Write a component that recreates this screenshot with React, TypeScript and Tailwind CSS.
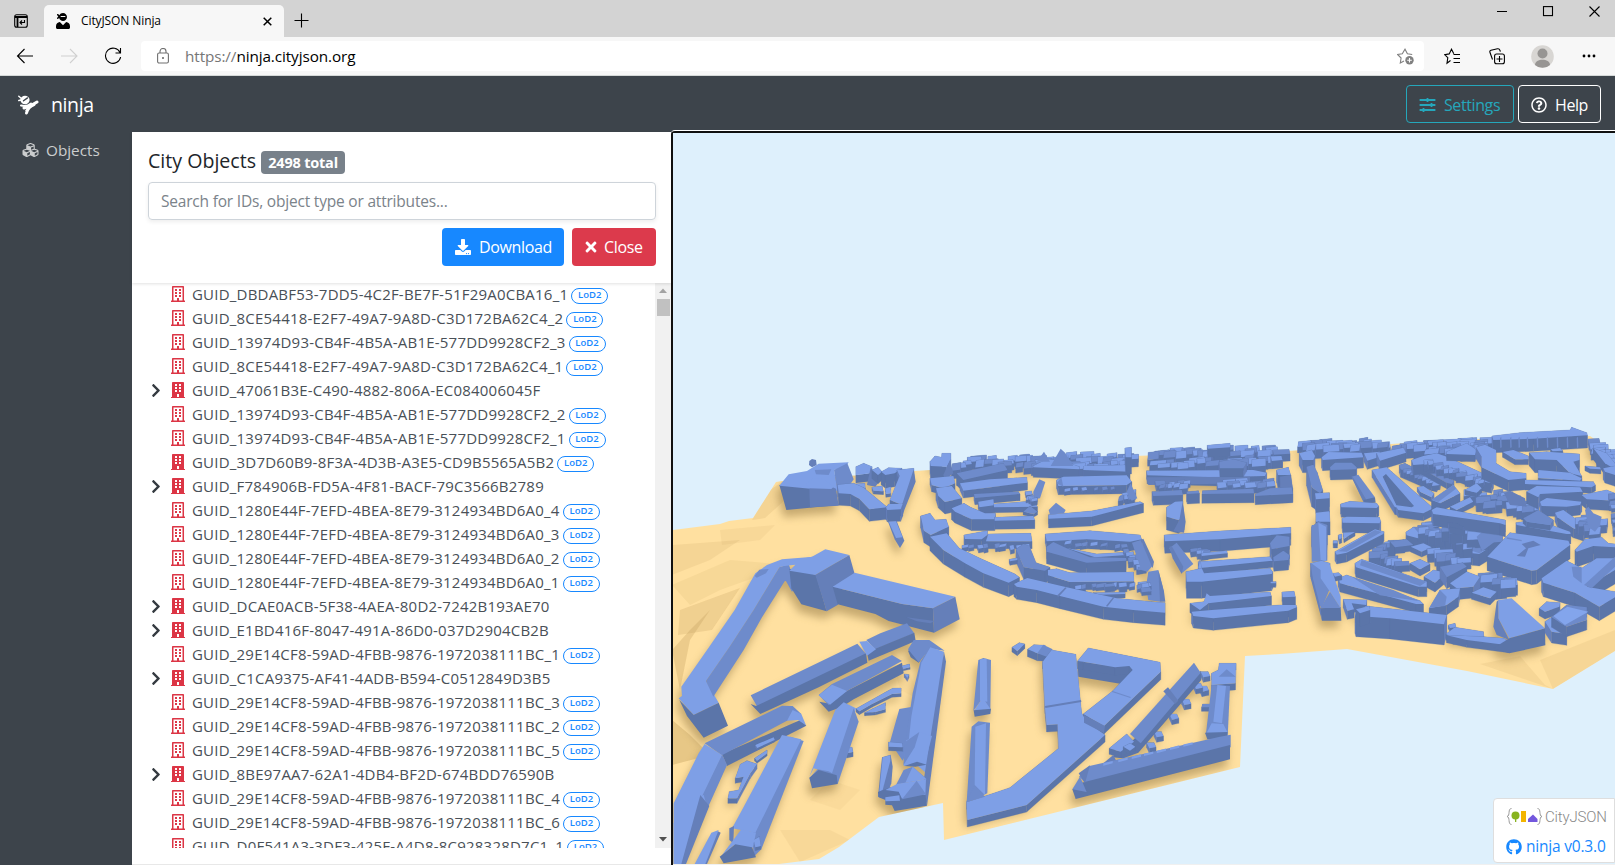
import React from "react";
import {
  FaBuilding, FaChevronRight, FaCubes, FaDownload, FaGithub, FaRegBuilding,
  FaRegQuestionCircle, FaSlidersH, FaTimes, FaUserNinja,
} from "react-icons/fa";

type Kind = "part" | "leaf" | "parent";

const objects: [string, Kind][] = [
  ["GUID_DBDABF53-7DD5-4C2F-BE7F-51F29A0CBA16_1", "part"],
  ["GUID_8CE54418-E2F7-49A7-9A8D-C3D172BA62C4_2", "part"],
  ["GUID_13974D93-CB4F-4B5A-AB1E-577DD9928CF2_3", "part"],
  ["GUID_8CE54418-E2F7-49A7-9A8D-C3D172BA62C4_1", "part"],
  ["GUID_47061B3E-C490-4882-806A-EC084006045F", "parent"],
  ["GUID_13974D93-CB4F-4B5A-AB1E-577DD9928CF2_2", "part"],
  ["GUID_13974D93-CB4F-4B5A-AB1E-577DD9928CF2_1", "part"],
  ["GUID_3D7D60B9-8F3A-4D3B-A3E5-CD9B5565A5B2", "leaf"],
  ["GUID_F784906B-FD5A-4F81-BACF-79C3566B2789", "parent"],
  ["GUID_1280E44F-7EFD-4BEA-8E79-3124934BD6A0_4", "part"],
  ["GUID_1280E44F-7EFD-4BEA-8E79-3124934BD6A0_3", "part"],
  ["GUID_1280E44F-7EFD-4BEA-8E79-3124934BD6A0_2", "part"],
  ["GUID_1280E44F-7EFD-4BEA-8E79-3124934BD6A0_1", "part"],
  ["GUID_DCAE0ACB-5F38-4AEA-80D2-7242B193AE70", "parent"],
  ["GUID_E1BD416F-8047-491A-86D0-037D2904CB2B", "parent"],
  ["GUID_29E14CF8-59AD-4FBB-9876-1972038111BC_1", "part"],
  ["GUID_C1CA9375-AF41-4ADB-B594-C0512849D3B5", "parent"],
  ["GUID_29E14CF8-59AD-4FBB-9876-1972038111BC_3", "part"],
  ["GUID_29E14CF8-59AD-4FBB-9876-1972038111BC_2", "part"],
  ["GUID_29E14CF8-59AD-4FBB-9876-1972038111BC_5", "part"],
  ["GUID_8BE97AA7-62A1-4DB4-BF2D-674BDD76590B", "parent"],
  ["GUID_29E14CF8-59AD-4FBB-9876-1972038111BC_4", "part"],
  ["GUID_29E14CF8-59AD-4FBB-9876-1972038111BC_6", "part"],
  ["GUID_D0F541A3-3DF3-425F-A4D8-8C928328D7C1_1", "part"],
];

/* ---------- 3D city view ---------- */

const TONES: Record<string, string> = { t: "#7e9fe6", l: "#83a5ec", m: "#6e8bcb", s: "#657fb9", d: "#5b75a9" };

// "<tone><height> x,y x,y ..." : a roof outline and the height its walls drop.
function Block({ spec }: { spec: string }) {
  const [head, ...rest] = spec.split(" ");
  const h = Number(head.slice(1));
  const pts = rest.map((p) => p.split(",").map(Number));
  const walls = pts
    .map((p, i) => [p, pts[(i + 1) % pts.length]])
    .sort((a, b) => a[0][1] + a[1][1] - b[0][1] - b[1][1]);
  return (
    <g>
      {h > 0 &&
        walls.map(([a, b], i) => {
          const steep = Math.abs(b[1] - a[1]) > Math.abs(b[0] - a[0]) * 1.3;
          const fill = steep ? TONES.s : TONES.d;
          return (
            <polygon key={i} fill={fill} stroke={fill} strokeWidth="0.8"
              points={`${a[0]},${a[1]} ${b[0]},${b[1]} ${b[0]},${b[1] + h} ${a[0]},${a[1] + h}`} />
          );
        })}
      <polygon points={rest.join(" ")} fill={TONES[head[0]]} />
    </g>
  );
}

// A band of small houses between two points.
function houses(x0: number, y0: number, x1: number, y1: number, n: number, size: number, spread: number, seed: number) {
  let s = seed * 7919;
  const rnd = () => ((s = (s * 16807) % 2147483647) / 2147483647);
  const out: { y: number; spec: string }[] = [];
  for (let i = 0; i < n; i++) {
    const t = (i + rnd() * 0.6) / n;
    const x = x0 + (x1 - x0) * t;
    const y = y0 + (y1 - y0) * t + (rnd() - 0.5) * spread;
    const w = size * (0.6 + rnd() * 0.8);
    const d = size * (0.25 + rnd() * 0.3);
    const h = Math.round(size * (0.45 + rnd() * 0.4));
    const k = (rnd() - 0.5) * 8;
    const f = (a: number, b: number) => `${a.toFixed(1)},${b.toFixed(1)}`;
    const tone = rnd() > 0.5 ? "t" : "m";
    out.push({ y, spec: `${tone}${h} ${f(x, y)} ${f(x + w, y - 3 + k / 3)} ${f(x + w + k, y + d)} ${f(x + k, y + d + 3)}` });
  }
  return out.sort((a, b) => a.y - b.y).map((o) => o.spec);
}

const west = [
  "d0 322,195 480,200 500,255 343,270",
  "t0 322,197 350,163 405,153 440,131 530,127 520,140 486,150 498,215 480,203 415,206",
  "m0 486,150 526,130 545,178 520,215 496,212",
  "m0 428,150 478,148 470,165 432,163", "s0 412,206 425,190 450,188 492,206 500,257 414,262", "t0 402,192 425,174 455,178 485,200 478,207 412,205",
  "s0 412,123 420,117 432,120 434,135 420,142 411,135",
  "t24 552,140 575,130 600,140 596,160 552,165", "s0 596,142 625,180 610,200 585,195",
  "t26 600,150 618,142 630,155 618,165", "t40 628,155 650,143 690,145 668,160 640,165",
  "t10 600,202 630,198 634,214 604,212", "t10 640,206 656,200 656,220 642,222",
  "t12 548,192 578,190 580,205 550,208",
  "t14 675,150 725,145 727,175 705,225 690,255 654,240 683,168",
  "s0 725,148 731,185 697,270 688,300 690,255",
  "t36 497,194 545,190 575,203 605,228 646,262 592,268 562,236 535,222 500,220",
  "t36 642,262 650,252 692,252 686,268 646,270",
  "s0 648,305 674,303 697,362 684,384 668,358",
  "t0 650,305 672,304 692,352 672,354",
];
const westFront = [
  "m0 325,442 350,432 372,500 360,515 340,480 330,484",
  "t0 250,460 285,435 330,418 425,410 322,442 245,570 173,680 102,783 140,848 65,885 20,835 30,828 28,800 105,690 188,570",
  "m0 322,442 350,436 364,478 338,484 305,536 270,592 215,690 124,830 102,783 173,680 245,570",
  "m0 248,468 262,449 290,447 282,460 254,473",
  "d0 65,885 140,848 168,917 95,953 45,888 22,840",
  "d0 352,446 432,464 464,574 388,553 358,505",
  "t0 318,440 345,425 420,410 460,388 532,405 430,465 352,452 370,434",
  "s0 430,465 532,405 548,462 500,520 498,554 464,574",
  "d0 482,500 690,552 783,565 786,638 650,603 610,582 497,553",
  "t0 482,500 548,458 850,530 783,565 690,552",
  "s0 783,565 850,530 863,598 786,638", "s0 704,592 788,603 775,610 735,604",
];

const southWest = [
  "m0 583,90 625,70 705,40 727,70 610,118", "d0 727,68 731,93 590,152 585,128 610,116",
  "m0 236,256 460,148 556,101 582,132 256,290", "d0 252,288 582,130 586,158 440,232 265,312 236,282", "t0 562,95 585,93 612,118 585,137",
  "d0 465,280 520,245 690,158 695,190 545,268 510,290 470,305 442,275",
  "m0 440,255 480,222 660,135 690,153 515,248 470,285", "t0 440,256 480,224 525,243 474,284",
  "t6 690,168 712,162 714,172 694,176", "t10 697,192 711,194 706,204",
  "t10 552,296 640,247 662,235 687,234 687,250 660,252 600,282 562,304", "t9 578,308 602,296 640,278 640,298 610,306",
  "t14 518,412 540,412 543,426 524,430",
  "t0 470,350 490,300 515,277 552,295 490,495 425,475 412,500", "m0 545,295 560,335 497,522 480,490", "m0 412,505 437,478 470,484 490,495 470,510", "d0 412,503 440,480 494,496 497,522 420,535",
  "d0 708,122 716,142 740,158 780,100", "m0 708,118 725,90 772,90 818,122 775,116 740,157",
  "m0 682,297 722,290 708,420 692,452 670,420 650,410", "t12 650,396 690,400 692,412 650,410",
  "m0 745,155 722,250 700,395 700,468 745,375 772,115",
  "t0 748,158 775,112 816,125 775,500 705,440 718,320",
  "s0 816,125 822,155 765,587 752,530",
  "s0 630,442 656,434 662,470 658,520 640,566 618,560", "t0 632,442 655,436 655,452 632,540 622,545",
  "t0 702,392 742,366 780,378 758,462 695,468", "m0 700,395 742,366 728,412 694,466", "d0 697,468 735,455 764,464 730,470",
  "m0 672,525 695,480 722,470 762,505", "t0 722,470 764,508 700,518",
  "d0 618,546 655,532 690,545 760,552 765,587 668,603 660,586 640,584 640,570 620,562", "t0 640,540 675,522 762,508 760,555 735,552 690,566 680,545", "m0 734,512 762,553 690,568", "t0 640,562 682,556 684,572 640,574",
  "d0 150,432 385,330 403,347 165,468", "m0 98,400 330,287 362,288 388,312 345,332 150,436", "t0 345,332 362,300 388,312 402,346 378,330",
  "m0 150,432 165,465 108,592 35,762 10,762 80,575", "t0 5,580 80,430 98,402 150,435 80,580 30,680 5,762",
  "t0 5,640 40,575 95,555 105,590 30,762 5,762", "s0 85,555 112,588 42,762 28,762",
  "t6 250,405 305,382 308,390 256,414", "t8 248,445 285,420 285,430 255,452",
  "t15 205,463 225,452 255,462 235,490 195,565 168,565 172,545 200,540 215,500 190,505",
  "m0 355,380 395,393 268,718 245,740 240,660", "t0 210,600 330,375 388,388 250,668 180,655",
  "t10 245,690 262,680 266,708 250,712", "s0 172,655 186,648 184,700 172,690",
  "t0 208,658 252,668 242,714 185,706 150,735", "d0 143,740 190,703 240,712 252,742 155,760",
  "s0 135,662 146,668 105,762 85,762", "t0 118,668 140,660 100,762 68,762",
];

const south = [
  "t14 246,52 268,38 284,42 262,63", "t22 293,58 312,44 345,46 352,72 322,70", "m0 322,70 340,44 368,58 350,80",
  "m0 145,90 160,84 183,90 181,240 158,205 130,242", "t0 150,88 170,86 172,215 150,212", "t0 158,203 182,238 132,242", "d0 131,241 183,236 181,252 134,260",
  "d0 443,97 555,108 605,106 612,128 575,162 445,140",
  "t24 443,93 475,54 690,97 692,125 522,288 460,252 548,183 608,120 598,108 555,112 460,95",
  "t21 338,95 365,60 437,73 455,250 470,275 525,315 290,525 112,570 110,517 240,473 386,355 383,283 350,285 345,230",
  "s0 345,228 453,210 454,216 346,234", "m0 546,182 602,201 601,204 546,186", "s0 462,255 525,288 522,310 462,278",
  "m0 125,290 145,274 180,278 172,490 110,517", "t0 136,290 168,280 165,495 134,465", "m0 134,466 165,500 108,517",
  ...[[812, 125], [808, 168], [755, 208], [718, 252], [672, 305], [650, 338], [790, 160]].map(([x, y]) => `t15 ${x},${y} ${x + 22},${y} ${x + 28},${y + 13} ${x + 8},${y + 17}`),
  "d0 812,122 814,150 625,368 580,385 545,382 600,340", "m0 600,312 792,98 812,128 632,340", "s0 700,184 714,172 745,212 735,222", "t18 538,355 590,312 612,335 572,365", "t12 580,350 600,340 616,350 600,362",
  "s0 510,408 550,375 560,395",
  "t20 845,130 865,120 868,100 918,100 916,160 845,165", "m0 866,140 890,118 917,140", "m12 818,222 845,222 845,232 815,232",
  "m0 845,165 900,168 893,320 828,310", "t0 862,165 888,168 876,280 850,275", "t0 830,308 845,280 880,282 893,308", "d0 825,308 893,306 890,328 832,328",
  "m0 447,440 478,408 870,320 902,314 902,352 467,458", "d0 455,458 900,345 900,388 437,507 427,478", "m0 427,478 450,440 470,486", "s0 446,430 480,406 465,460",
  ...[520, 565, 605, 642, 680, 720, 760].map((x) => `t0 ${x},${400 - (x - 520) * 0.235} ${x + 28},${393 - (x - 520) * 0.235} ${x + 28},${400 - (x - 520) * 0.235} ${x},${407 - (x - 520) * 0.235}`),
];

const centre = [
  ...houses(150, 122, 680, 104, 34, 34, 26, 77), ...houses(740, 92, 1130, 84, 24, 36, 22, 912),
  ...houses(745, 126, 1130, 110, 20, 34, 16, 913), ...houses(340, 130, 690, 124, 16, 30, 14, 44),
  "t38 90,125 105,108 125,112 126,100 152,100 152,118 140,140 92,138", "s0 150,120 160,160 135,180 130,165",
  "t26 922,76 990,70 990,82 924,86",
  "t30 400,138 440,118 480,120 538,140 538,148 400,142", "m0 452,138 482,86 495,98 520,138", "m0 410,125 432,95 450,125",
  "t24 552,138 675,135 690,155 550,150", "t50 675,84 694,82 694,112 677,112",
  "m36 170,160 310,130 322,150 190,180", "t22 180,190 270,178 380,172 382,188 190,212", "m20 222,222 355,215 360,222 225,234",
  "t20 90,175 160,168 165,190 130,205 95,195", "t36 108,205 155,198 185,235 135,246 115,228",
  "m0 400,215 418,178 436,186 420,235 400,238", "t22 235,245 280,238 282,256 238,262", "t16 282,252 400,243 412,260 282,262",
  ...houses(375, 220, 400, 245, 5, 18, 12, 51), "m10 370,275 390,258 412,275 400,282",
  "t34 155,265 192,250 212,262 255,280 286,280 284,298 215,298 165,275", "t26 284,292 400,288 404,300 284,302",
  "t26 470,180 490,170 680,166 695,185 680,195 475,198", "m0 470,190 484,172 490,200", ...houses(485, 206, 650, 200, 6, 14, 4, 9),
  ...houses(655, 225, 690, 215, 6, 22, 16, 94), "m0 680,215 692,190 712,235 695,242",
  "t28 446,284 575,273 720,245 730,250 575,290 446,296", "m0 446,270 468,248 497,270 492,280 450,284",
  "t26 740,152 1060,150 1100,158 1095,168 950,172 742,166", "s0 740,172 1050,170 1050,190 745,195", "m26 958,125 1000,118 1040,128 1030,145 960,145",
  ...houses(765, 190, 860, 188, 9, 22, 14, 17), ...houses(950, 185, 1110, 180, 12, 26, 18, 18),
  "t38 1130,150 1165,142 1172,165 1134,165", "s40 1140,170 1172,165 1178,205 1142,205",
  "m28 756,215 845,210 848,225 760,228", "m30 860,215 895,212 898,220 862,222", "m28 908,212 1060,206 1062,220 906,222", "m26 1066,222 1110,205 1175,202 1178,222 1066,228",
  "t40 800,262 825,245 848,244 852,290 835,300 800,290", "s0 848,246 857,305 852,338 820,334 838,300",
  "t36 62,288 90,280 105,300 138,298 146,320 92,345 72,332",
  "t28 192,345 262,332 262,345 245,358 195,357", "t22 265,342 392,340 396,364 258,364", ...houses(180, 374, 385, 374, 9, 18, 6, 40),
  "t28 436,342 570,332 720,345 725,358 690,365 560,358 440,364", ...houses(480, 367, 690, 374, 7, 15, 8, 31),
  "t12 500,384 590,402 690,396 690,404 585,412", ...houses(670, 390, 720, 440, 9, 22, 20, 33),
  "m0 696,368 722,360 760,435 742,455 724,450", "s0 722,360 730,356 762,425 758,445",
  "m36 440,380 460,366 500,385 570,412 678,414 678,422 560,428 440,395",
  "m38 348,388 370,372 388,378 408,428 450,442 435,452 372,442", "t12 328,418 352,414 352,420 330,424",
  "t24 444,450 470,446 510,458 700,456 702,484 510,486 444,466", ...houses(520, 495, 700, 488, 8, 20, 6, 71),
  "m0 738,500 745,455 775,450 792,515 780,545 745,540", "s0 775,450 792,515 796,545 780,545", ...houses(710, 492, 730, 500, 5, 20, 20, 55), "t12 580,518 675,517 675,522 600,524",
  "t42 90,350 140,340 178,385 240,415 345,462 358,472 326,488 250,460 195,430 130,390",
  "t38 342,492 382,474 500,502 650,535 755,545 795,548 795,578 700,570 610,560 480,528 410,510 350,500",
  "s0 470,528 496,502 500,504 476,530", "s0 618,558 640,530 644,532 622,560",
  "t36 793,345 960,333 1172,322 1172,340 960,358 795,364", "m38 1110,370 1130,346 1168,350 1168,378 1115,388",
  "m0 808,385 830,368 880,432 845,460", "s0 808,380 815,378 850,440 845,462 818,415", ...houses(870, 385, 920, 400, 6, 22, 14, 21), "t12 905,400 980,392 982,400 905,408",
  "t20 895,425 1110,410 1118,422 900,444", "m30 1120,412 1150,392 1168,405 1165,420 1122,424", "t40 895,445 900,420 908,460",
  "t50 858,455 905,445 912,460 1110,445 1118,455 1115,462 905,485 860,485", "t12 1112,485 1128,485 1127,490 1112,490",
  "t28 870,550 912,545 920,520 930,528 1110,516 1114,528 925,550 900,570", "t28 1146,516 1182,514 1186,530 1148,532",
  "t36 875,575 935,570 1140,555 1188,555 1190,562 1165,572 940,595 880,588",
];

const east = [
  ...houses(50, 100, 300, 94, 20, 38, 20, 303), ...houses(330, 102, 610, 90, 20, 38, 16, 304), ...houses(430, 118, 600, 104, 14, 34, 16, 305),
  "t38 636,78 720,68 870,60 875,52 920,68 922,76 760,86 640,90", ...[660, 690, 715, 740, 770, 800, 830, 860, 890].map((x) => `m0 ${x},84 ${x + 4},80 ${x + 5},112 ${x + 1},114`),
  ...houses(920, 92, 1000, 150, 12, 36, 26, 306), "t34 940,115 980,130 1005,160 1005,178 975,160", "t14 915,168 960,172 962,178 930,176", "t34 970,175 1005,168 1005,195 975,185",
  "t14 812,118 840,114 848,122 818,124",
  "t38 58,130 95,120 105,138 100,150 68,150", "t32 125,142 145,126 245,128 250,142 128,150", "t26 252,130 300,125 300,140 262,152", "t28 290,130 370,113 378,128 300,152",
  "m30 150,172 165,158 215,158 230,172 228,178 152,180",
  "m58 80,170 100,164 112,188 128,240 120,250 95,232", "t42 105,250 148,248 148,265 108,268", "t40 108,308 148,304 150,335 108,335",
  "m0 215,200 235,194 285,262 268,272 250,272", "s0 214,200 218,200 258,268 252,280", "d0 250,270 285,262 287,278 255,280",
  "t30 182,282 210,274 290,280 296,288 290,294 184,292", "t30 186,325 200,320 298,322 302,334 298,340 188,338",
  "d0 305,195 325,192 450,295 430,320 355,310 348,290",
  "t22 276,180 320,172 335,185 460,295 430,310 355,300 348,290 345,285 395,292 402,288 318,192 308,200 352,292 345,292",
  "m24 358,165 375,160 475,212 470,222 455,218 362,178", ...houses(368, 175, 465, 220, 9, 18, 6, 310), "t14 412,232 430,228 462,250 455,262 420,245", "m18 418,172 440,166 522,212 515,222 500,218",
  "t30 395,150 430,138 470,130 500,140 640,205 635,220 600,212 470,160 400,165", ...houses(430, 150, 610, 215, 15, 24, 8, 311),
  "t20 560,100 590,120 585,135 500,132 500,125",
  "t34 588,112 615,104 648,120 648,160 690,185 738,190 738,205 685,210 605,172 605,140",
  "t16 668,126 700,120 745,138 745,148 705,148",
  "t40 748,128 800,125 898,132 898,150 880,155 905,198 870,190 830,150 765,148", "t18 775,180 870,188 905,205 900,212 775,204",
  "t18 735,210 940,215 946,225 935,232 735,222", ...houses(640, 252, 740, 292, 14, 34, 30, 312), "s0 672,250 690,242 735,265 740,290 690,285",
  "t36 740,245 770,228 900,232 908,245 780,252 775,262", "t30 780,275 800,264 905,275 900,285 860,290 785,288", "t30 905,255 980,240 1005,250 1005,272 920,268",
  "t28 825,308 850,300 920,350 910,365 880,355 832,322", ...houses(885, 315, 940, 345, 9, 34, 30, 313), "m0 915,300 925,290 940,310 965,320 960,345 945,365 925,350",
  ...houses(985, 240, 1000, 360, 7, 24, 20, 322),
  ...houses(550, 240, 625, 275, 9, 34, 18, 314), "t26 455,270 520,225 540,250 480,280", "m0 455,270 520,225 528,236 475,276", "t16 510,290 570,262 580,275 530,300", "t14 555,240 590,220 605,235 590,248",
  ...houses(395, 352, 445, 328, 4, 34, 8, 330),
  "t36 378,366 400,352 480,362 560,390 598,430 660,376 662,392 598,432 578,430 470,400 380,376",
  "m0 400,350 660,365 655,395 598,430 420,374",
  ...houses(410, 352, 560, 402, 8, 34, 6, 331), ...houses(480, 345, 640, 378, 8, 42, 8, 332),
  "m0 590,380 612,360 660,368 640,398 606,424",
  "t36 455,300 470,292 676,330 676,345 660,340 460,312",
  "d18 505,338 530,340 548,350 555,360 508,350",
  "t30 708,338 770,330 870,365 872,372 860,372 710,345", "m16 730,325 775,300 820,330 810,345 740,335",
  "t42 622,440 690,368 865,392 870,405 770,480 755,482", "s0 725,402 760,392 782,405 745,415 735,440 710,438 738,415", "m0 680,382 725,390 725,394 680,386",
  "t46 885,420 915,388 965,382 985,400 1005,402 1005,412 940,408 890,425",
  ...houses(325, 388, 262, 425, 6, 40, 8, 341), "m18 330,395 380,388 400,405 345,412", "t16 392,410 430,400 455,412 425,425",
  ...houses(440, 415, 540, 452, 7, 42, 8, 342), ...houses(300, 436, 350, 455, 5, 32, 10, 343), "t20 390,460 420,448 450,462 420,478",
  "t28 432,500 460,480 500,488 465,518", "m34 480,470 548,458 560,470 500,502",
  "t30 225,460 245,448 440,515 440,530 415,530 228,472", "m0 245,450 440,515 420,528 240,466",
  "t26 175,505 200,495 420,572 430,582 408,582 180,520", "m0 215,500 340,540 420,574 300,556", "t14 158,490 175,488 185,496 165,500",
  "t28 165,425 285,358 312,365 310,372 200,428 170,434", "m0 175,424 285,360 305,366 200,425", "t14 175,375 185,372 185,385 178,388", "t12 190,368 225,366 205,378 192,386", "t14 160,392 172,392 172,400 160,400",
  ...houses(590, 486, 680, 512, 8, 46, 14, 350), "t34 510,520 560,485 600,500 580,530 530,535", "t20 575,548 610,532 650,545 630,565", "t30 448,595 480,540 540,535 535,560 500,585", "m0 448,593 480,540 500,560 495,588",
  "t42 785,505 860,452 905,475 950,445 1005,445 1005,480 920,530 1005,545 1005,562 958,590 885,548 790,518", "m0 912,525 1005,440 1005,470 935,535", "m0 875,470 905,470 905,520 880,500",
  "m60 95,350 115,335 142,345 140,385 98,380", "m0 95,345 140,345 142,452 95,455", "t0 115,338 138,350 138,452 122,452", "t40 92,460 125,452 150,460 145,500 110,510",
  "m0 92,458 122,480 150,535 125,595 115,580 100,520", "t0 122,455 150,465 182,560 182,595 150,545 122,505", "d0 120,595 182,592 184,632 126,632", "m0 122,594 150,545 182,594", "s0 92,480 122,595 126,632 92,505",
  "t26 190,568 260,570 258,585 215,580 222,598 202,602",
  "t62 225,608 258,588 500,615 492,643 330,625 228,618", "t40 228,598 268,588 270,600 240,610",
  "t12 505,645 525,640 528,652 510,654", "t18 498,672 525,652 610,665 612,688 520,685", "t22 612,680 670,685 700,700 685,706 560,690 500,676",
  "t0 655,570 695,565 795,655 688,685 655,625", "s0 650,575 655,570 655,625 688,690 650,675 640,650", "d0 688,685 795,655 796,706 688,730 640,715",
  "t22 778,595 800,575 840,578 838,590 795,605", "t34 795,635 820,618 855,645 860,672 815,665", "m30 815,622 860,585 920,592 920,630 860,650", "l0 862,590 925,605 855,645 820,618",
];

const regions = [
  { at: "translate(1280 410)", blocks: east },
  { at: "translate(900 420)", blocks: centre },
  { at: "translate(672 420)", blocks: west },
  { at: "translate(672 420)", blocks: westFront },
  { at: "translate(672 610)", blocks: southWest },
  { at: "translate(930 630)", blocks: south },
];

const ground =
  "672,530 720,524 729,521 753,518 776,482 782,481 915,471 930,470 1133,456 1288,451 1450,440 1590,436 1615,453 1615,651 1553,689 1467,671 1347,649 1280,654 1245,656 1240,767 944,840 943,803 879,817 839,847 819,859 779,864 672,864";

const groundFolds: [string, number][] = [
  ["672,545 740,540 710,560 672,575", 0.14], ["672,585 730,560 790,565 720,590 690,605", 0.11], ["680,610 740,588 712,630 678,635", 0.22],
  ["720,530 775,525 760,540 722,545", 0.1], ["672,650 690,630 710,610 690,640 680,690", 0.28], ["672,720 690,735 710,755 672,765", 0.35],
  ["752,520 770,490 782,482 785,500 765,518", 0.16], ["1480,664 1520,656 1545,685 1553,689", 0.12], ["1553,689 1540,660 1615,630 1615,651", 0.12],
  ["780,830 830,830 850,840 800,862", 0.1], ["830,780 860,790 840,810 810,800", 0.08], ["890,650 905,660 920,700 900,690", 0.06],
];

function CityView() {
  return (
    <svg viewBox="673 133 942 731" className="block h-full w-full" preserveAspectRatio="none" shapeRendering="geometricPrecision">
      <defs>
        <filter id="soft" x="-10%" y="-10%" width="120%" height="120%"><feGaussianBlur stdDeviation="13" /></filter>
        <clipPath id="land"><polygon points={ground} /></clipPath>
      </defs>
      <polygon points={ground} fill="#ffe0a0" />
      <g clipPath="url(#land)">
        {groundFolds.map(([p, o]) => <polygon key={p} points={p} fill="#b99856" opacity={o} />)}
        {regions.map((r, i) => (
          <g key={i} transform={`${r.at} scale(0.33333)`}>
            <g filter="url(#soft)" opacity="0.5" transform="translate(-8 22)">
              {r.blocks.map((b, j) => <polygon key={j} points={b.slice(b.indexOf(" ") + 1)} fill="#8e7340" />)}
            </g>
          </g>
        ))}
      </g>
      {regions.map((r, i) => (
        <g key={i} transform={`${r.at} scale(0.33333)`}>
          {r.blocks.map((b, j) => <Block key={j} spec={b} />)}
        </g>
      ))}
    </svg>
  );
}

/* ---------- Browser chrome ---------- */

const line = { fill: "none", stroke: "currentColor", strokeWidth: 1.1 } as const;

function TabStrip() {
  return (
    <div className="flex h-[37px] items-stretch bg-[#d3d3d3] text-black">
      <div className="flex w-11 items-center pl-[14px] pt-[5px]">
        <svg width="14" height="14" viewBox="0 0 14 14" {...line}>
          <rect x=".7" y=".7" width="12.6" height="12.6" rx="2" /><path d="M1 3h12M3.5 3v10" strokeWidth="1.8" /><path d="M10.5 6v2.5H6M8 6.5l-2 2 2 2" />
        </svg>
      </div>
      <div className="mt-[5px] flex w-60 items-center rounded-t-[5px] bg-[#f7f7f7] pl-3">
        <FaUserNinja className="h-4 w-[14px]" />
        <span className="ml-[11px] text-[12px] tracking-[-0.1px]">CityJSON Ninja</span>
        <svg className="ml-auto mr-[12px]" width="9" height="9" viewBox="0 0 9 9" {...line} strokeWidth="1.5"><path d="M.7.7l7.6 7.6M8.3.7L.7 8.3" /></svg>
      </div>
      <svg className="ml-[10px] mt-[13px]" width="15" height="15" viewBox="0 0 15 15" {...line}><path d="M7.5.5v14M.5 7.5h14" /></svg>
      <div className="ml-auto flex items-start pr-[15px] pt-[6px]">
        <svg width="103" height="11" viewBox="0 0 103 11" {...line}><path d="M0 5.500h10M92.500 .5l10 10M102.500 .5l-10 10" /><rect x="46.500" y=".6" width="9" height="9" /></svg>
      </div>
    </div>
  );
}

function Toolbar() {
  return (
    <div className="flex h-[39px] items-center border-b border-[#d5d9d8] bg-[#f7f7f7] pr-[19px]">
      <svg className="ml-4" width="106" height="18" viewBox="0 0 106 18" {...line}>
        <path d="M17 9H1.500M8.500 2L1.500 9l7 7" /><path d="M45 9h15.500M54 2l7 7-7 7" stroke="#d0d0d0" />
        <path d="M104 5.500A7.600 7.600 0 1 0 104.600 10M104.500 1v5h-5" />
      </svg>
      <div className="ml-[19px] flex h-[30px] flex-1 items-center rounded-[4px] bg-white pl-4 pr-[10px]">
        <svg className="text-[#707070]" width="12" height="16" viewBox="0 0 12 16" {...line}><rect x=".6" y="5" width="10.800" height="10" rx="1.500" /><path d="M3 5V3.500a3 3 0 0 1 6 0V5" /><circle cx="6" cy="10" r=".5" fill="currentColor" /></svg>
        <span className="ml-[16px] text-[15.300px] tracking-[-0.1px] text-black"><span className="text-[#767676]">https://</span>ninja.cityjson.org</span>
        <svg className="ml-auto text-[#808080]" width="17" height="17" viewBox="0 0 17 17" {...line}>
          <path d="M7 13l-3.700 2 .8-5L.6 6.500l4.700-.7L8 1.200l2.400 4.600 4.800.7" /><circle cx="12.500" cy="12.300" r="4.200" fill="currentColor" stroke="none" /><path d="M12.500 10v4.600M10.200 12.300h4.600" stroke="#fff" />
        </svg>
      </div>
      <svg className="ml-5" width="17" height="17" viewBox="0 0 17 17" {...line}><path d="M6.500 12.500l-3.500 2.700.8-5.500L.7 6.600l4.500-.7L7.500 1.200l2.300 4.500M9.500 6.500H16M9.500 10.500H16M9.500 14.500H16" /></svg>
      <svg className="ml-7" width="16" height="17" viewBox="0 0 16 17" {...line}><rect x="5.600" y="6" width="9.800" height="9.800" rx="2" /><path d="M10.500 8v6M7.500 11h6M3.500 11.500L1 4.500C.5 3 1 2.500 2 2.200L8.500.8C10 .5 10.500 1 11 2.500l.4 1.200" /></svg>
      <svg className="ml-[26px]" width="23" height="23" viewBox="0 0 23 23"><circle cx="11.500" cy="11.500" r="11.300" fill="#d8d6d3" /><circle cx="11.500" cy="8.500" r="5" fill="#979593" /><path d="M4 20c0-7 15-7 15 0a11.300 11.300 0 0 1-15 0z" fill="#979593" /></svg>
      <svg className="ml-7" width="14" height="4" viewBox="0 0 14 4"><circle cx="2" cy="2" r="1.400" /><circle cx="7" cy="2" r="1.400" /><circle cx="12" cy="2" r="1.400" /></svg>
    </div>
  );
}

/* ---------- Application ---------- */

function NinjaLogo() {
  return (
    <svg className="ml-[1px] mt-[4px]" width="21" height="20" viewBox="0 0 21 20" fill="none" stroke="#fff" strokeLinecap="round">
      <ellipse cx="7" cy="5" rx="4.600" ry="4.200" fill="#fff" stroke="none" /><path d="M.8 1.200L4 4M.8 5.500L3 5" strokeWidth="1.500" />
      <path d="M5.500 5.800L9.500 2.900" stroke="#3d444b" strokeWidth="1.400" /><path d="M3 10.500c4 1 7 .5 10-2" strokeWidth="2" />
      <path d="M6 13c5-1 9-3.500 13-6" strokeWidth="3" /><path d="M8.500 18c1-4 3.500-7 7.500-8.500" strokeWidth="3" /><path d="M8 15.500l6.500-5" strokeWidth="1.500" />
    </svg>
  );
}

function ObjectRow({ id, kind }: { id: string; kind: Kind }) {
  const Icon = kind === "part" ? FaRegBuilding : FaBuilding;
  return (
    <li className="flex h-6 items-center whitespace-nowrap pl-[18px]">
      <span className="w-[21px] shrink-0">{kind === "parent" && <FaChevronRight className="h-[15px] w-[12px] text-[#343a40]" />}</span>
      <Icon className="h-4 w-[14px] shrink-0 text-[#dc3545]" />
      <span className="ml-[7px] text-[15px] tracking-[0.215px] text-[#495057]">{id}</span>
      {kind !== "parent" && (
        <span className="ml-[3px] mt-[3px] flex h-4 w-[37px] items-center justify-center rounded-full border border-[#1788ff] text-[9.500px] font-semibold text-[#1788ff]">LoD2</span>
      )}
    </li>
  );
}

function ObjectsPanel() {
  return (
    <section className="flex w-[539px] shrink-0 flex-col border-b border-[#e8e8e8] bg-white">
      <div className="z-10 h-[151px] shrink-0 pl-4 pr-[15px] pt-[17px] shadow-[0_1px_3px_rgba(0,0,0,0.12)]">
        <h1 className="flex h-6 items-center text-[19.600px] font-medium tracking-[0px] text-[#212529]">
          City Objects
          <span className="ml-[5px] mt-[3px] flex h-[23px] w-[84px] items-center justify-center rounded-[4px] bg-[#78818a] text-[14.500px] font-bold tracking-[-0.2px] text-white">2498 total</span>
        </h1>
        <div className="mt-[9px] flex h-[38px] items-center rounded-[4px] border border-[#ced4da] px-3 pt-[2px] text-[15.500px] tracking-[-0.2px] text-[#7b838a] shadow-[0_2px_4px_rgba(0,0,0,0.07)]">
          Search for IDs, object type or attributes...
        </div>
        <div className="mt-2 flex justify-end gap-2 text-[16px] tracking-[-0.35px] text-white">
          <button className="flex h-[38px] w-[122px] items-center rounded-[4px] bg-[#1788ff] pl-[13px]"><FaDownload className="mr-2 h-4 w-4" />Download</button>
          <button className="flex h-[38px] w-[84px] items-center rounded-[4px] bg-[#dc3a4c] pl-3"><FaTimes className="mr-[6px] h-4 w-[14px]" />Close</button>
        </div>
      </div>
      <div className="flex h-[565px] overflow-hidden">
        <ul className="-mt-[1px] flex-1">{objects.map(([id, kind]) => <ObjectRow key={id} id={id} kind={kind} />)}</ul>
        <div className="flex w-4 flex-col items-center bg-[#f1f1f1]">
          <svg className="mt-[5px] shrink-0" width="8" height="5"><path d="M0 5l4-4.500L8 5z" fill="#a3a3a3" /></svg>
          <div className="mt-[6px] h-[17px] w-[13px] bg-[#c1c1c1]" />
          <svg className="mb-[6px] mt-auto" width="8" height="5"><path d="M0 0l4 4.500L8 0z" fill="#505050" /></svg>
        </div>
      </div>
    </section>
  );
}

function Credits() {
  return (
    <aside className="absolute bottom-[2px] right-0 h-[65px] w-[122px] rounded-l-[4px] border border-[#dedede] bg-white pl-3">
      <div className="mt-[6px] flex h-[24px] items-center">
        <svg width="37" height="20" viewBox="0 0 37 20">
          <path d="M5.500 1.500C1.500 1.500 4.500 9 1 9.500c3.500.5.500 8 4.500 8M31.500 1.500c4 0 1 7.500 4.500 8-3.500.5-.5 8-4.500 8" fill="none" stroke="#999" strokeWidth="1" />
          <circle cx="9.500" cy="8.500" r="4" fill="#88b31f" /><path d="M9 9h1.300v6H9z" fill="#88b31f" /><rect x="15" y="4" width="5" height="11" fill="#f3b500" /><path d="M22 15v-3l5-4.500 4.500 4.500v3z" fill="#7357dd" />
        </svg>
        <span className="ml-[2px] font-[Roboto] text-[15px] font-light tracking-[-0.15px] text-[#888]">CityJSON</span>
      </div>
      <div className="mt-[6px] flex h-[24px] items-center text-[15.500px] tracking-[-0.2px] text-[#1788ff]"><FaGithub className="mr-1 h-4 w-4" />ninja v0.3.0</div>
    </aside>
  );
}

export default function App() {
  return (
    <div className="flex h-[865px] w-[1615px] flex-col overflow-hidden bg-[#3d444b] font-['Open_Sans','Noto_Sans',sans-serif]">
      <TabStrip />
      <Toolbar />
      <header className="flex h-[54px] shrink-0 items-center px-[17px] text-white">
        <NinjaLogo />
        <span className="ml-[12px] mt-[3px] text-[19.500px] tracking-[-0.4px]">ninja</span>
        <div className="ml-auto mr-[-3px] flex gap-1 text-[16px] tracking-[-0.4px]">
          <button className="mt-[2px] flex h-[38px] w-[108px] items-center rounded-[4px] border border-[#25a7bb] pl-3 pt-[1px] text-[#25a7bb]"><FaSlidersH className="mr-2 h-4 w-[17px]" />Settings</button>
          <button className="mt-[2px] flex h-[38px] w-[83px] items-center rounded-[4px] border border-white pl-3 pt-[1px]"><FaRegQuestionCircle className="mr-2 h-4 w-4" />Help</button>
        </div>
      </header>
      <div className="flex h-[735px]">
        <nav className="w-[132px] shrink-0 pl-[22px] pt-[8px]">
          <div className="flex h-6 items-center text-[15.300px] tracking-[0px] text-[#cbcdce]"><FaCubes className="mr-[7px] h-4 w-[17px]" />Objects</div>
        </nav>
        <div className="flex pt-[2px]"><ObjectsPanel /></div>
        <main className="relative flex-1 overflow-hidden rounded-tl-[4px] border-t border-white bg-[#101010] pl-[2px] pt-[2px]">
          <div className="h-full border-b border-[#f0f0f0] bg-[#def0fc]"><CityView /></div>
          <Credits />
        </main>
      </div>
    </div>
  );
}
